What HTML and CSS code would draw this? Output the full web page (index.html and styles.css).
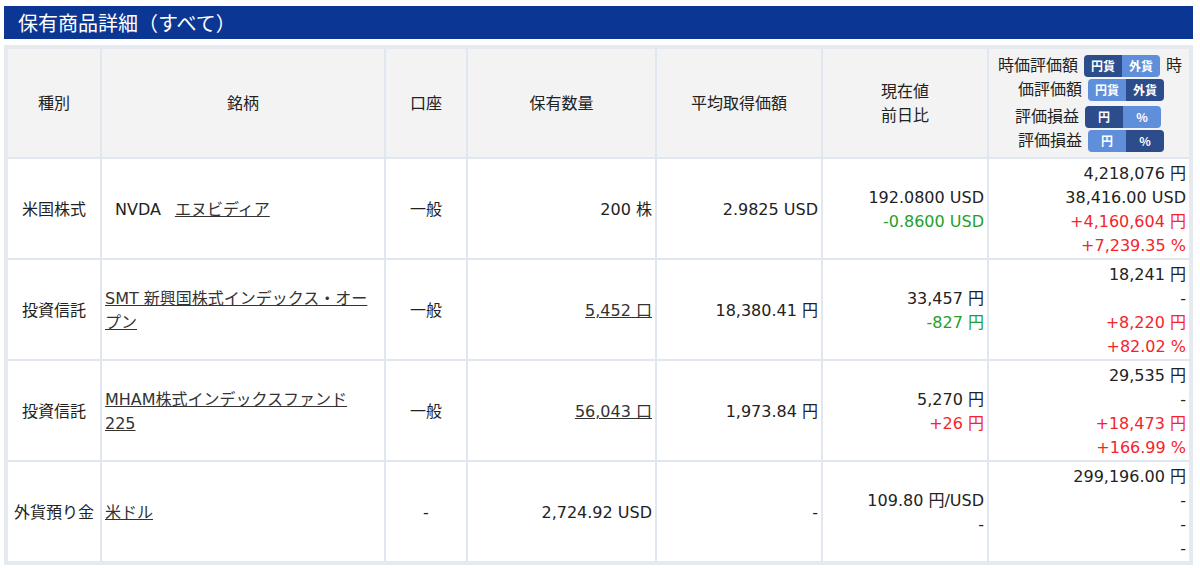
FILE: index.html
```html
<!DOCTYPE html>
<html lang="ja">
<head>
<meta charset="utf-8">
<title>保有商品詳細</title>
<link rel="stylesheet" href="styles.css">
</head>
<body>
<div class="page">
  <h2 class="section-title">保有商品詳細（すべて）</h2>
  <table class="holdings">
    <colgroup>
      <col class="c-type"><col class="c-name"><col class="c-acct"><col class="c-qty"><col class="c-avg"><col class="c-price"><col class="c-value">
    </colgroup>
    <thead>
      <tr>
        <th>種別</th>
        <th>銘柄</th>
        <th>口座</th>
        <th>保有数量</th>
        <th>平均取得価額</th>
        <th>現在値<br>前日比</th>
        <th class="th-value">
          <div class="tgl-group">
            <div class="tgl-line l1">時価評価額<span class="seg-toggle"><span class="seg seg-on">円貨</span><span class="seg">外貨</span></span>時</div>
            <div class="tgl-line l2">価評価額<span class="seg-toggle"><span class="seg">円貨</span><span class="seg seg-on">外貨</span></span></div>
          </div>
          <div class="tgl-group">
            <div class="tgl-line l3">評価損益<span class="seg-toggle"><span class="seg seg-on">円</span><span class="seg">%</span></span></div>
            <div class="tgl-line l4">評価損益<span class="seg-toggle"><span class="seg">円</span><span class="seg seg-on">%</span></span></div>
          </div>
        </th>
      </tr>
    </thead>
    <tbody>
      <tr>
        <td class="center">米国株式</td>
        <td class="name"><span class="ticker">NVDA</span><a href="#">エヌビディア</a></td>
        <td class="center">一般</td>
        <td class="num">200 株</td>
        <td class="num">2.9825 USD</td>
        <td class="num">192.0800 USD<br><span class="down">-0.8600 USD</span></td>
        <td class="num">4,218,076 円<br>38,416.00 USD<br><span class="up">+4,160,604 円</span><br><span class="up">+7,239.35 %</span></td>
      </tr>
      <tr>
        <td class="center">投資信託</td>
        <td class="name"><a href="#">SMT 新興国株式インデックス・オープン</a></td>
        <td class="center">一般</td>
        <td class="num"><a href="#">5,452 口</a></td>
        <td class="num">18,380.41 円</td>
        <td class="num">33,457 円<br><span class="down">-827 円</span></td>
        <td class="num">18,241 円<br>-<br><span class="up">+8,220 円</span><br><span class="up">+82.02 %</span></td>
      </tr>
      <tr>
        <td class="center">投資信託</td>
        <td class="name"><a href="#">MHAM株式インデックスファンド225</a></td>
        <td class="center">一般</td>
        <td class="num"><a href="#">56,043 口</a></td>
        <td class="num">1,973.84 円</td>
        <td class="num">5,270 円<br><span class="up">+26 円</span></td>
        <td class="num">29,535 円<br>-<br><span class="up">+18,473 円</span><br><span class="up">+166.99 %</span></td>
      </tr>
      <tr>
        <td class="center">外貨預り金</td>
        <td class="name"><a href="#">米ドル</a></td>
        <td class="center">-</td>
        <td class="num">2,724.92 USD</td>
        <td class="num">-</td>
        <td class="num">109.80 円/USD<br>-</td>
        <td class="num">299,196.00 円<br>-<br>-<br>-</td>
      </tr>
    </tbody>
  </table>
</div>
</body>
</html>
```

FILE: styles.css
```css
* { box-sizing: border-box; }

body {
  margin: 0;
  background: #fff;
  color: #222;
  font-family: "DejaVu Sans", "Noto Sans CJK JP", sans-serif;
  font-size: 16px;
}

.page {
  padding: 6px 7px 0 4px;
}

.section-title {
  margin: 0;
  height: 33px;
  padding-left: 14px;
  background: #0b3693;
  color: #fff;
  font-family: "Noto Sans CJK JP", sans-serif;
  font-size: 20px;
  font-weight: normal;
  line-height: 33px;
}

.holdings {
  margin-top: 6px;
  width: 100%;
  table-layout: fixed;
  border-collapse: collapse;
  border: 4px solid #e4eaf0;
  line-height: 24px;
}

.c-type { width: 95px; }
.c-name { width: 284px; }
.c-acct { width: 82px; }
.c-qty { width: 189px; }
.c-avg { width: 166px; }
.c-price { width: 166px; }

.holdings th,
.holdings td {
  border: 2px solid #e0e7ee;
  vertical-align: middle;
}

.holdings th {
  background: #f3f3f3;
  font-weight: normal;
  text-align: center;
  padding: 5px 3px 4px;
}

.holdings td {
  padding: 3px 3px 0;
}

.holdings td.name {
  padding-right: 12px;
}

.holdings a {
  color: #333;
  text-decoration: underline;
}

.center { text-align: center; }
.num { text-align: right; }
.name { text-align: left; line-break: strict; }

.ticker {
  margin: 0 14px 0 10px;
}

.up { color: #f5242b; }
.down { color: #23a02a; }

.th-value { text-align: right; }

.tgl-group + .tgl-group { margin-top: 3px; }

.tgl-line {
  display: flex;
  justify-content: flex-end;
  align-items: center;
  gap: 6px;
  height: 24px;
}

.tgl-line.l1 { margin-right: 4px; }
.tgl-line.l2 { margin-right: 22px; }
.tgl-line.l3 { margin-right: 25px; }
.tgl-line.l4 { margin-right: 22px; }

.seg-toggle {
  display: inline-flex;
  width: 76px;
  height: 22px;
  border-radius: 4px;
  overflow: hidden;
}

.seg {
  flex: 1;
  display: flex;
  align-items: center;
  justify-content: center;
  background: #5f8fda;
  color: #fff;
  font-family: "Noto Sans CJK JP", sans-serif;
  font-size: 12px;
  font-weight: bold;
  line-height: 1;
}

.seg.seg-on { background: #2c4c8b; }
```
